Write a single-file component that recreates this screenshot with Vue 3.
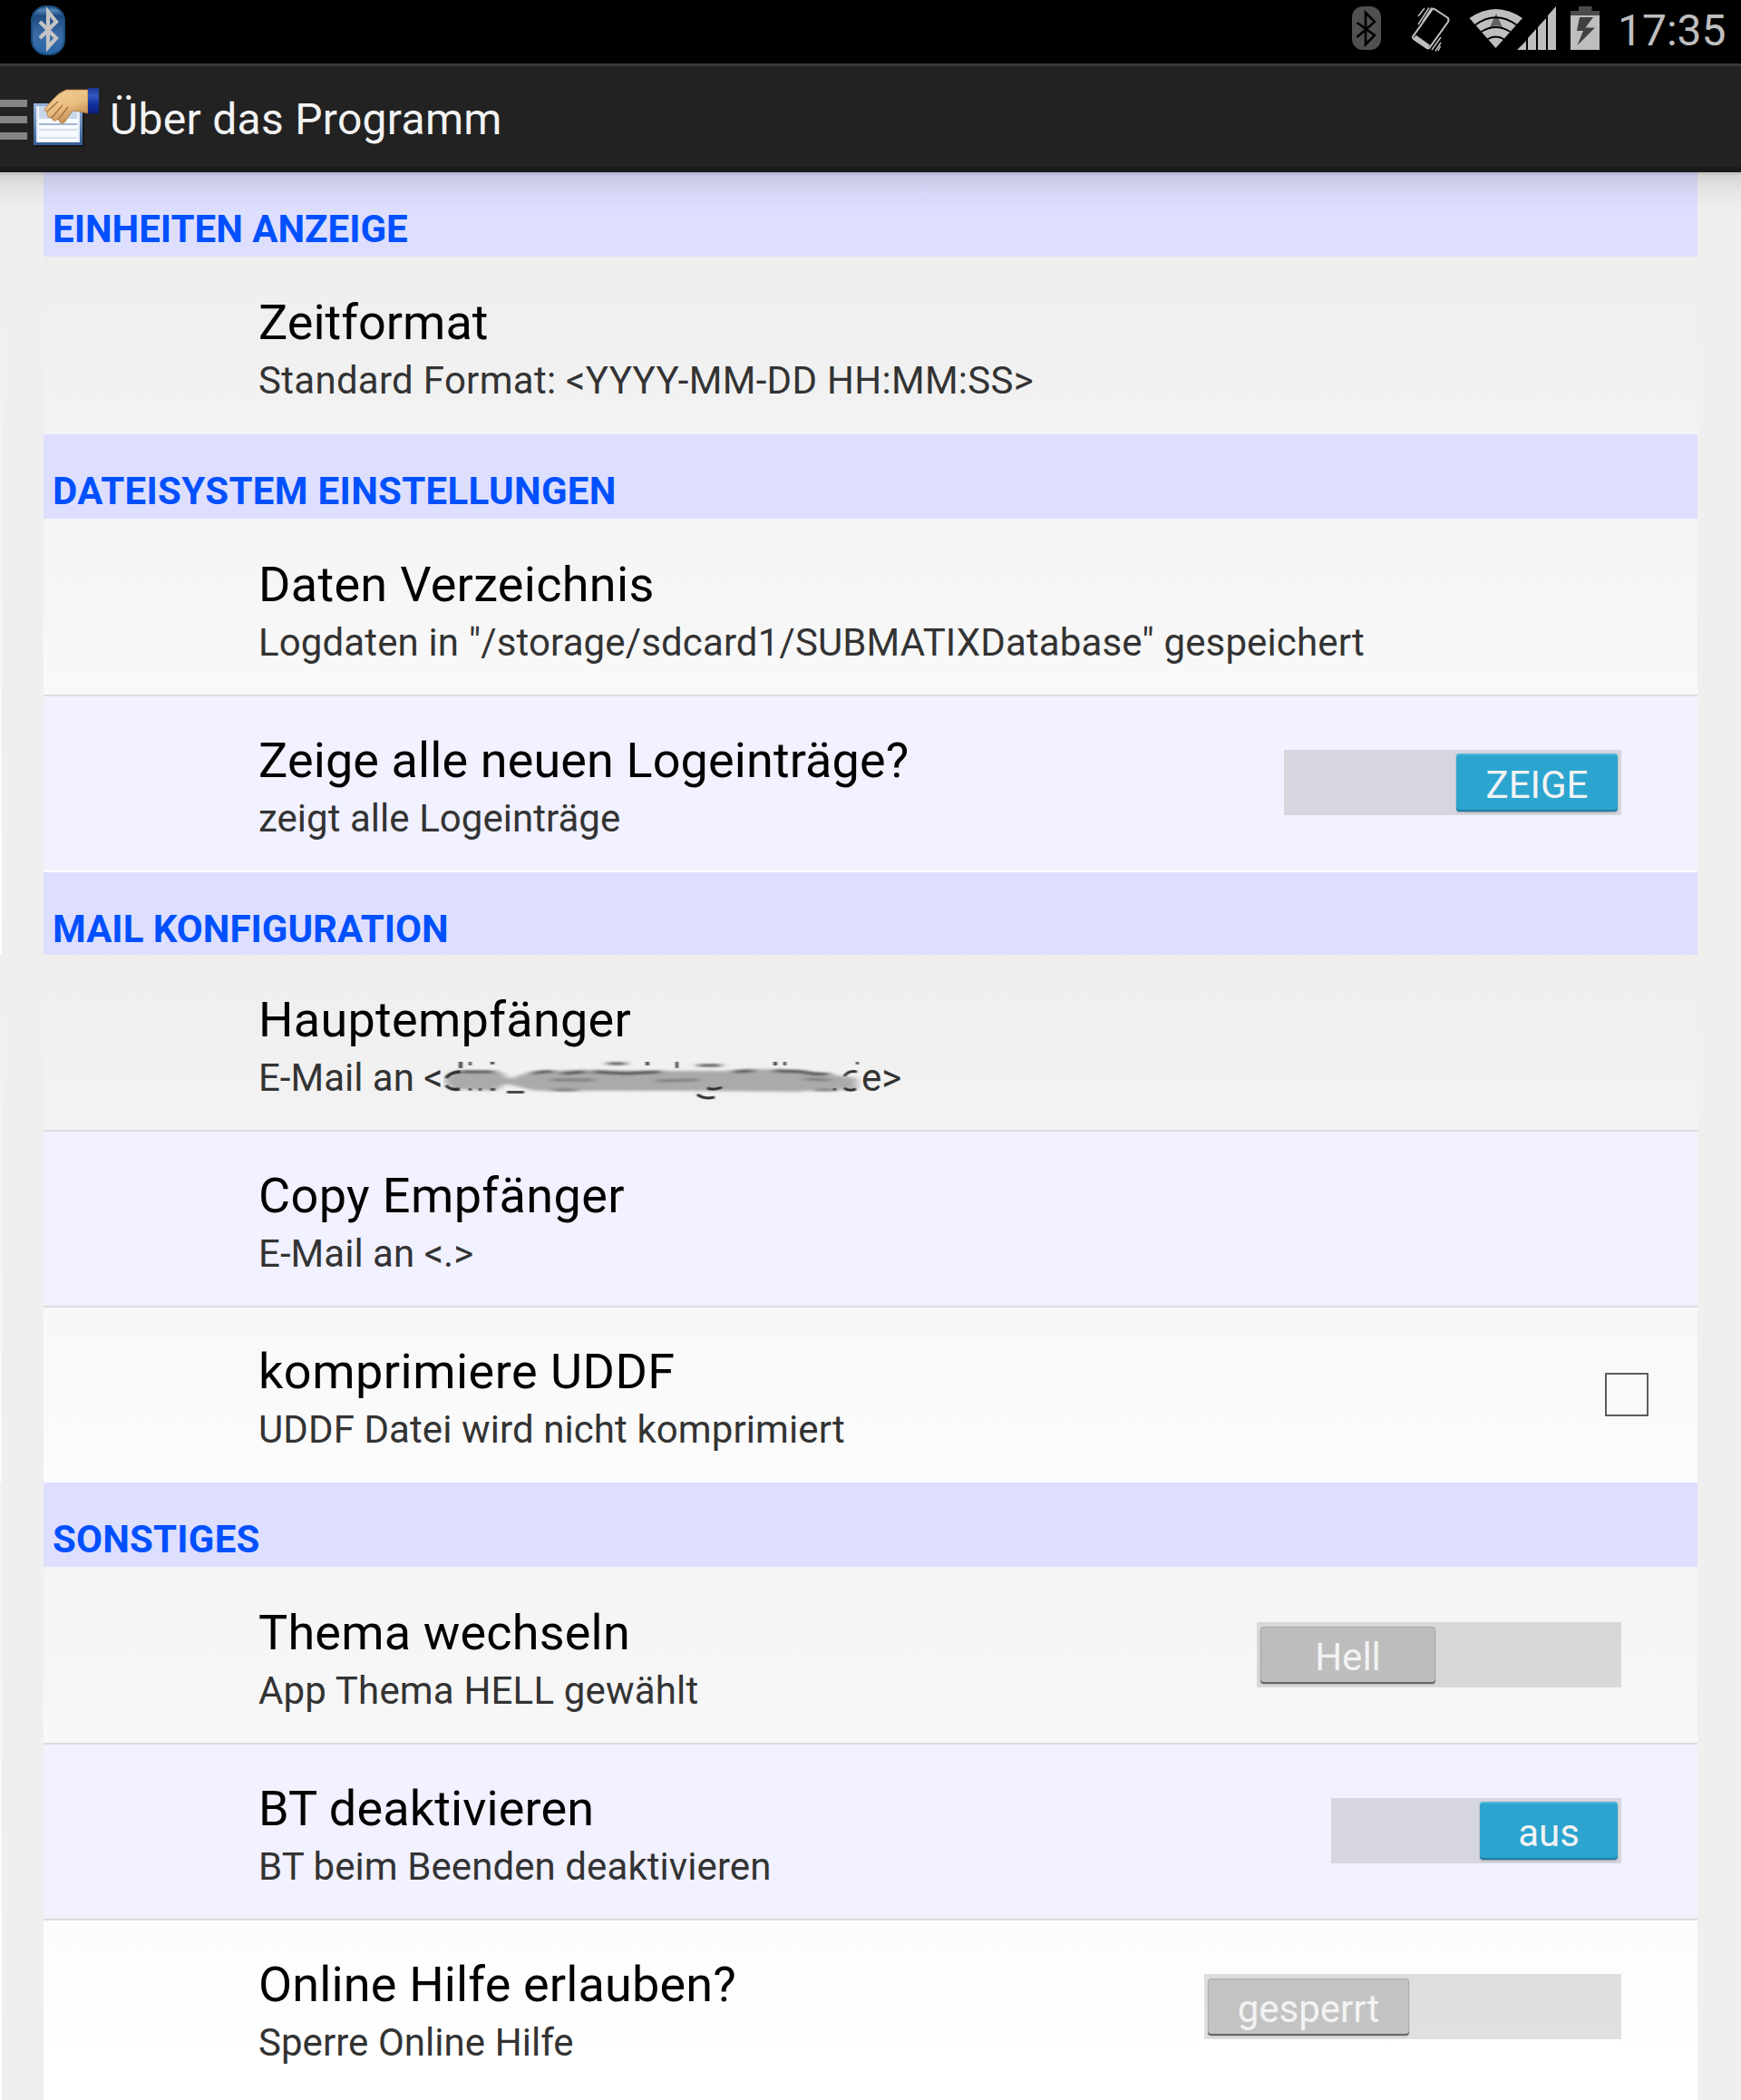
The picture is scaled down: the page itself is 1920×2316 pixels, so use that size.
<script setup>
const sections = [
  { title: 'EINHEITEN ANZEIGE', rows: [
    { t: 'Zeitformat', s: 'Standard Format: <YYYY-MM-DD HH:MM:SS>', sl: 0.29, cls: 'first tall' },
  ] },
  { title: 'DATEISYSTEM EINSTELLUNGEN', ls: 0.32, rows: [
    { t: 'Daten Verzeichnis', tl: 0.3, s: 'Logdaten in "/storage/sdcard1/SUBMATIXDatabase" gespeichert', sl: 0.13, cls: 'first tall line' },
    { t: 'Zeige alle neuen Logeinträge?', tl: 0.11, s: 'zeigt alle Logeinträge', sl: 0.04, cls: 'blue gap', sw: 'ZEIGE', on: true, w: 372, tw: 178 },
  ] },
  { title: 'MAIL KONFIGURATION', cls: 'short', rows: [
    { t: 'Hauptempfänger', tl: 0.28, s: 'E-Mail an <', smudge: true, cls: 'main-mail line' },
    { t: 'Copy Empfänger', tl: 0.38, s: 'E-Mail an <.>', sl: 0.04, cls: 'blue line' },
    { t: 'komprimiere UDDF', tl: 0.48, s: 'UDDF Datei wird nicht komprimiert', sl: 0.09, cls: 'zip', check: true },
  ] },
  { title: 'SONSTIGES', ls: 0.2, rows: [
    { t: 'Thema wechseln', tl: 0.18, s: 'App Thema HELL gewählt', sl: 0.17, cls: 'first tall line', sw: 'Hell', w: 402, tw: 193 },
    { t: 'BT deaktivieren', tl: 0.12, s: 'BT beim Beenden deaktivieren', sl: 0.08, cls: 'blue line', sw: 'aus', on: true, w: 320, tw: 152 },
    { t: 'Online Hilfe erlauben?', tl: 0.15, s: 'Sperre Online Hilfe', sl: 0.05, cls: 'last', sw: 'gesperrt', w: 460, tw: 222 },
  ] },
]
const spacing = (v) => (v ? { letterSpacing: v + 'px' } : null)
</script>

<template>
  <div class="screen">
    <header class="status">
      <svg class="bt-app" width="40" height="56" viewBox="0 0 40 56">
        <defs><linearGradient id="btg" x1="0" y1="0" x2="0" y2="1"><stop offset="0" stop-color="#1f4f86" /><stop offset=".08" stop-color="#5585b8" /><stop offset=".2" stop-color="#1d4a80" /><stop offset=".6" stop-color="#3a6da8" /><stop offset="1" stop-color="#2a66a6" /></linearGradient></defs>
        <rect x="2" y="1" width="36" height="53" rx="16" fill="url(#btg)" stroke="#194d7c" stroke-width="2" />
        <path d="M11 18L29 36L20 46V7L29 18L11 36" fill="none" stroke="#c4c4c4" stroke-width="4.2" />
      </svg>
      <svg class="status-icons" width="290" height="66" viewBox="1480 0 290 66">
        <rect x="1491" y="7" width="32" height="48" rx="12" fill="#505050" />
        <path d="M1496.500 25L1516 39L1506 49V14L1516 24L1496.500 41" fill="none" stroke="#000" stroke-width="2.6" />
        <g fill="none" stroke="#bebebe">
          <path d="M1582 10L1597 20Q1598 22 1597 24L1577 52Q1576 54 1574 53L1559 43Q1557 41 1559 39L1579 11Q1580 9 1582 10Z" stroke-width="2.1" />
          <path d="M1560 41L1575.500 52" stroke-width="5.500" />
          <path d="M1564 18L1571 9M1564 27L1576 8.500M1569 24L1579 8.500M1579 55L1589 41M1583 56.500L1589 47M1586 56L1588.500 51" stroke-width="1.500" />
        </g>
        <path d="M1620.500 20Q1649.500 0 1679 20L1649.500 53Z" fill="#bebebe" />
        <path d="M1650 15L1657 30Q1650 27 1643 30Z" fill="#636363" />
        <g fill="none" stroke="#000" stroke-width="2"><path d="M1627 27.500Q1649.500 11 1672.500 27.500" /><path d="M1633.500 35Q1649.500 25 1665.500 35" /><path d="M1640 43.500Q1649.500 37.500 1659 43.500" /></g>
        <path d="M1673 55L1683 45V55ZM1685 42L1694 32V55H1685ZM1696 30L1705 20V55H1696ZM1707 17L1716 7V55H1707Z" fill="#bebebe" />
        <path d="M1732 17V12H1741V7H1755.500V12H1764V17Z" fill="#4b4b4b" />
        <path d="M1732 17H1764V55H1732Z" fill="#bebebe" />
        <path d="M1742 19H1757L1748.500 30.500H1759L1739.500 50L1746 34H1739Z" fill="#404040" />
      </svg>
      <span class="clock">17:35</span>
    </header>

    <div class="bar">
      <svg width="112" height="90" viewBox="0 84 112 90">
        <defs>
          <linearGradient id="skin" x1="0" y1="0" x2=".5" y2="1"><stop offset="0" stop-color="#f3cf98" /><stop offset=".6" stop-color="#e9bd80" /><stop offset="1" stop-color="#bf8a50" /></linearGradient>
          <linearGradient id="cuff" x1="0" y1="0" x2="0" y2="1"><stop offset="0" stop-color="#1b3792" /><stop offset=".3" stop-color="#3557c4" /><stop offset=".6" stop-color="#1434a0" /><stop offset="1" stop-color="#0a2080" /></linearGradient>
          <linearGradient id="edge" x1="0" y1="0" x2="0" y2="1"><stop offset="0" stop-color="#96b4d8" /><stop offset="1" stop-color="#365f96" /></linearGradient>
        </defs>
        <path d="M0 110H30V118H0ZM0 128H30V136H0ZM0 146H30V154H0Z" fill="#858589" />
        <rect x="39" y="117" width="54" height="45" fill="#111" opacity=".6" />
        <rect x="37" y="114" width="54" height="46" fill="url(#edge)" />
        <rect x="40" y="117" width="48" height="40" fill="#dfe9f6" />
        <rect x="42" y="118" width="44" height="38" fill="#f7faff" />
        <path d="M43 117H85V131H43Z" fill="#c9d7ea" />
        <path d="M43 137H85" stroke="#a5b6cf" stroke-width="2" />
        <path d="M43 143H85M43 152H85" stroke="#d8dfe9" stroke-width="2" />
        <path d="M97 99L73 99Q65 102 59 109L50 119Q48 123 52 123Q51 130 57 130Q59 136 64 131Q67 139 72 134L80 122Q88 123 97 125Z" fill="url(#skin)" stroke="#a87540" stroke-width=".8" />
        <path d="M52 123L64 112M57 130L69 116M64 132L75 118" fill="none" stroke="#a87443" stroke-width="1.500" />
        <rect x="97" y="97" width="12" height="28" fill="url(#cuff)" />
      </svg>
      <h1>Über das Programm</h1>
    </div>

    <main>
      <section v-for="s in sections" :key="s.title">
        <h2 :class="s.cls" :style="spacing(s.ls)">{{ s.title }}</h2>
        <div v-for="r in s.rows" :key="r.t" class="row" :class="r.cls">
          <div>
            <h3 :style="spacing(r.tl)">{{ r.t }}</h3>
            <p v-if="r.smudge" class="mail">
              <span>{{ r.s }}</span>
              <svg width="461" height="50" viewBox="489 1164 461 50">
                <defs>
                  <filter id="soft" x="-5%" y="-50%" width="110%" height="200%"><feGaussianBlur stdDeviation="4 1.5" /></filter>
                  <filter id="fine" x="-5%" y="-50%" width="110%" height="200%"><feGaussianBlur stdDeviation="1.2 .6" /></filter>
                  <filter id="streak" x="-5%" y="-50%" width="110%" height="200%"><feGaussianBlur stdDeviation="5 1" /></filter>
                </defs>
                <path d="M490 1194Q494 1181 506 1181L552 1182L562 1190L585 1182L640 1180L720 1181L800 1181L830 1179L880 1180L915 1185L945 1189V1201L900 1202L880 1204L760 1203L590 1203L558 1195L546 1203L500 1201Z" fill="#aaaaaa" filter="url(#soft)" />
                <g fill="none" stroke="#555" stroke-width="3" filter="url(#streak)">
                  <path d="M508 1182L545 1182M588 1184Q598 1181 610 1182M620 1184L645 1182M655 1182L690 1184L728 1182M810 1182L830 1181M854 1181L885 1182Q900 1186 914 1184" />
                  <path d="M608 1191L655 1191M724 1192L770 1191M888 1190L915 1191M610 1202L636 1202M898 1202L922 1202" stroke="#808080" />
                  <path d="M670 1173L690 1173M770 1175L795 1175" />
                </g>
                <g fill="none" stroke="#333" stroke-width="3" filter="url(#fine)">
                  <path d="M492 1189Q497 1182 508 1182M492 1197Q497 1203 507 1201" stroke-width="3.500" />
                  <path d="M769 1207Q777 1213 788 1210M780 1200Q788 1203 796 1199" />
                  <path d="M931 1187Q936 1180 945 1182M931 1200Q936 1204 944 1201" />
                </g>
                <path d="M506 1171H510V1178H506ZM517 1171H520V1175H517ZM541 1171H545V1174H541ZM712 1171H716V1175H712ZM745 1171H748V1178H745ZM853 1171H857V1175H853ZM864 1171H867V1175H864ZM559 1203H578V1206H559ZM517 1200H520V1203H517ZM528 1200H531V1203H528ZM541 1200H546V1203H541ZM919 1200H922V1203H919ZM944 1171H947V1174H944Z" fill="#4a4a4a" filter="url(#fine)" />
              </svg>
              <span>e&gt;</span>
            </p>
            <p v-else :style="spacing(r.sl)">{{ r.s }}</p>
          </div>
          <div v-if="r.sw" class="switch" :class="{ on: r.on }" :style="{ width: r.w + 'px' }"><b :style="{ width: r.tw + 'px' }">{{ r.sw }}</b></div>
          <i v-if="r.check" class="check"></i>
        </div>
      </section>
    </main>
  </div>
</template>

<style>
body { margin: 0; }
</style>
<style scoped>
.screen {
  width: 1920px; height: 2316px; overflow: hidden; font-family: Roboto, sans-serif;
  background:
    linear-gradient(#efefef, #efefef) 2px 0 / 46px 100% no-repeat,
    linear-gradient(#efefef, #efefef) 1872px 0 / 48px 100% no-repeat,
    linear-gradient(#eeeeee 283px, #ffffff 1053px, #eeeeee 1053px, #fcfcfc 1635px, #f2f2f2 1635px, #ffffff 2260px);
}
.status { height: 70px; background: #000; display: flex; align-items: flex-start; }
.bt-app { margin: 6px 0 0 33px; }
.status-icons { margin-left: 1407px; }
.clock { font-size: 48px; line-height: 56px; padding-top: 6px; margin-left: 14px; color: #bebebe; }
.bar { position: relative; box-sizing: border-box; height: 120px; display: flex; background: #222; border-top: 3px solid #3a3a3a; border-bottom: 6px solid #1b1b1b; }
.bar svg { margin-top: 11px; }
.bar::after {
  content: ''; position: absolute; left: 0; right: 0; top: 117px; height: 44px;
  background: linear-gradient(rgba(0, 0, 0, .17) 3px, rgba(0, 0, 0, .11) 3px, rgba(0, 0, 0, .035) 22px, rgba(0, 0, 0, 0));
}
h1, h2, h3, p { margin: 0; font-weight: 400; white-space: nowrap; }
h1 { font-size: 48px; line-height: 56px; padding: 31px 0 0 9px; color: #f3f3f3; letter-spacing: .3px; }
main { margin: 0 48px; }
h2 { box-sizing: border-box; height: 93px; padding: 38px 0 0 10px; background: #dedfff; color: #0050ff; font-size: 42px; line-height: 49px; font-weight: 700; }
.short { height: 91px; }
.row { box-sizing: border-box; height: 194px; padding: 39px 84px 0 237px; display: flex; justify-content: space-between; }
h3 { font-size: 54px; line-height: 63px; color: #000; }
p { font-size: 42px; line-height: 50px; color: #333; margin-top: 8px; }
.mail { display: flex; }
.mail span:first-child { width: 204px; }
.first { padding-top: 41px; }
.tall { height: 196px; }
.blue { background: #f1f1ff; }
.line { border-bottom: 2px solid #dcdcde; }
.gap { border-bottom: 2px solid #fcfcff; }
.main-mail { height: 195px; padding-top: 40px; }
.zip { height: 193px; }
.last { height: 198px; }
.switch { height: 72px; margin-top: 20px; background: rgba(0, 0, 0, .12); display: flex; }
.switch b {
  box-sizing: border-box; height: 63px; margin: 5px 4px 4px; border-radius: 4px;
  font-weight: 400; font-size: 42px; line-height: 67px; color: #f3f3f3; text-align: center;
  background: rgba(0, 0, 0, .12); box-shadow: inset 0 -2px #666, inset 0 0 0 1px rgba(0, 0, 0, .12), 0 1px 2px rgba(0, 0, 0, .15);
}
.switch.on { justify-content: flex-end; background: #d6d6df; }
.switch.on b { height: 64px; margin-top: 4px; line-height: 69px; background: #2ca4d0; box-shadow: inset 0 2px #50b6da, inset 0 -2px #1f7fa6, 0 1px 2px rgba(0, 0, 0, .3); }
.check { box-sizing: border-box; width: 48px; height: 48px; border: 2px solid #5c5c5c; margin: 33px -30px 0 0; }
</style>
